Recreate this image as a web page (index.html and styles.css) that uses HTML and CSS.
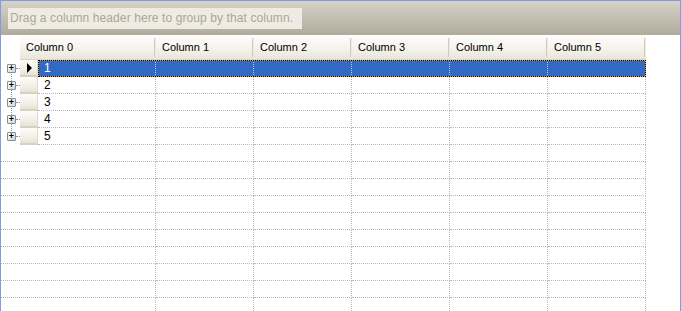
FILE: index.html
```html
<!DOCTYPE html>
<html lang="en">
<head>
    <meta charset="UTF-8">
    <title>Grid</title>
    <link rel="stylesheet" href="styles.css">
</head>
<body>
    <div class="grid">
        <div class="group-panel">
            <div class="group-hint">Drag a column header here to group by that column.</div>
        </div>
        <div class="header-row">
            <div class="header-cell">Column 0</div>
            <div class="header-cell">Column 1</div>
            <div class="header-cell">Column 2</div>
            <div class="header-cell">Column 3</div>
            <div class="header-cell">Column 4</div>
            <div class="header-cell">Column 5</div>
        </div>
        <div class="body">
            <div class="tree-line"></div>
            <div class="data-row selected">
                <div class="expander"><span class="plus">+</span></div>
                <div class="indicator"><span class="arrow"></span></div>
                <div class="cell first">1</div>
                <div class="cell"></div><div class="cell"></div><div class="cell"></div><div class="cell"></div><div class="cell"></div>
            </div>
            <div class="data-row">
                <div class="expander"><span class="plus">+</span></div>
                <div class="indicator"></div>
                <div class="cell first">2</div>
                <div class="cell"></div><div class="cell"></div><div class="cell"></div><div class="cell"></div><div class="cell"></div>
            </div>
            <div class="data-row">
                <div class="expander"><span class="plus">+</span></div>
                <div class="indicator"></div>
                <div class="cell first">3</div>
                <div class="cell"></div><div class="cell"></div><div class="cell"></div><div class="cell"></div><div class="cell"></div>
            </div>
            <div class="data-row">
                <div class="expander"><span class="plus">+</span></div>
                <div class="indicator"></div>
                <div class="cell first">4</div>
                <div class="cell"></div><div class="cell"></div><div class="cell"></div><div class="cell"></div><div class="cell"></div>
            </div>
            <div class="data-row">
                <div class="expander"><span class="plus">+</span></div>
                <div class="indicator"></div>
                <div class="cell first">5</div>
                <div class="cell"></div><div class="cell"></div><div class="cell"></div><div class="cell"></div><div class="cell"></div>
            </div>
            <div class="empty-row"><div></div><div></div><div></div><div></div><div></div><div></div></div>
            <div class="empty-row"><div></div><div></div><div></div><div></div><div></div><div></div></div>
            <div class="empty-row"><div></div><div></div><div></div><div></div><div></div><div></div></div>
            <div class="empty-row"><div></div><div></div><div></div><div></div><div></div><div></div></div>
            <div class="empty-row"><div></div><div></div><div></div><div></div><div></div><div></div></div>
            <div class="empty-row"><div></div><div></div><div></div><div></div><div></div><div></div></div>
            <div class="empty-row"><div></div><div></div><div></div><div></div><div></div><div></div></div>
            <div class="empty-row"><div></div><div></div><div></div><div></div><div></div><div></div></div>
            <div class="empty-row"><div></div><div></div><div></div><div></div><div></div><div></div></div>
            <div class="empty-row"><div></div><div></div><div></div><div></div><div></div><div></div></div>
        </div>
    </div>
</body>
</html>
```

FILE: styles.css
```css
html, body {
    margin: 0;
    padding: 0;
    background: #fff;
}
body {
    font-family: "Liberation Sans", Arial, sans-serif;
    font-size: 11px;
    color: #000;
}
.grid {
    width: 679px;
    height: 310px;
    border: 1px solid #7f9de0;
    border-bottom: none;
    overflow: hidden;
}
.group-panel {
    height: 27px;
    padding: 7px 0 0 7px;
    background: linear-gradient(to bottom, #d6d2c8, #b1ab9c);
}
.group-hint {
    width: 294px;
    height: 21px;
    line-height: 21px;
    padding-left: 2px;
    box-sizing: border-box;
    background: #eeece2;
    color: #aaa698;
    font-size: 12px;
    letter-spacing: 0.1px;
}
.header-row {
    display: grid;
    grid-template-columns: 136px repeat(5, 98px);
    margin-left: 19px;
    height: 25px;
}
.header-cell {
    position: relative;
    padding-left: 6px;
    line-height: 24px;
    background: linear-gradient(to bottom, #fdfdfb, #f4f2ea 60%, #e9e6da);
    border-bottom: 1px solid #d8d4c4;
}
.header-cell::after {
    content: "";
    position: absolute;
    right: 0;
    top: 3px;
    bottom: 2px;
    width: 2px;
    background: linear-gradient(to right, #c4c0b0, #f8f7f2);
}
.body {
    position: relative;
}
.tree-line {
    position: absolute;
    left: 10px;
    top: 9px;
    height: 68px;
    border-left: 1px dotted #8c8c8c;
}
.data-row {
    position: relative;
    display: grid;
    grid-template-columns: 19px 18px 118px repeat(5, 98px);
    height: 17px;
}
.expander {
    position: relative;
}
.expander::after {
    content: "";
    position: absolute;
    left: 15px;
    top: 8px;
    width: 4px;
    border-top: 1px dotted #8c8c8c;
}
.plus {
    position: absolute;
    left: 6px;
    top: 4px;
    width: 7px;
    height: 7px;
    border: 1px solid #7a8fa8;
    border-radius: 1px;
    background: linear-gradient(to bottom right, #fff, #d8d4c6);
    font-size: 9px;
    line-height: 7px;
    text-align: center;
    font-weight: bold;
    z-index: 1;
}
.indicator {
    position: relative;
    box-sizing: border-box;
    background: linear-gradient(to bottom, #fdfdfb, #efede4 70%, #e6e3d6);
    border-bottom: 2px solid #d6d2c2;
    border-right: 1px solid #dedbcc;
}
.arrow {
    position: absolute;
    left: 7px;
    top: 3px;
    border-left: 5px solid #000;
    border-top: 5px solid transparent;
    border-bottom: 5px solid transparent;
}
.cell {
    border-right: 1px dotted #b8b8b8;
    border-bottom: 1px dotted #b8b8b8;
    line-height: 16px;
}
.cell.first {
    padding-left: 6px;
    font-size: 12px;
}
.selected .cell {
    background: #316ac5;
    color: #fff;
    border-right-color: #b8c8e8;
    border-bottom-color: #316ac5;
}
.selected::after {
    content: "";
    position: absolute;
    left: 37px;
    top: 0;
    width: 608px;
    height: 17px;
    box-sizing: border-box;
    border: 1px dotted #000;
    background: none;
    pointer-events: none;
}
.selected::before {
    content: "";
    position: absolute;
    left: 37px;
    top: 0;
    width: 608px;
    height: 17px;
    box-sizing: border-box;
    border: 1px solid #e8a040;
}
.empty-row {
    display: grid;
    grid-template-columns: 155px repeat(5, 98px);
    height: 17px;
}
.empty-row div {
    border-right: 1px dotted #b8b8b8;
    border-bottom: 1px dotted #b8b8b8;
}
```
